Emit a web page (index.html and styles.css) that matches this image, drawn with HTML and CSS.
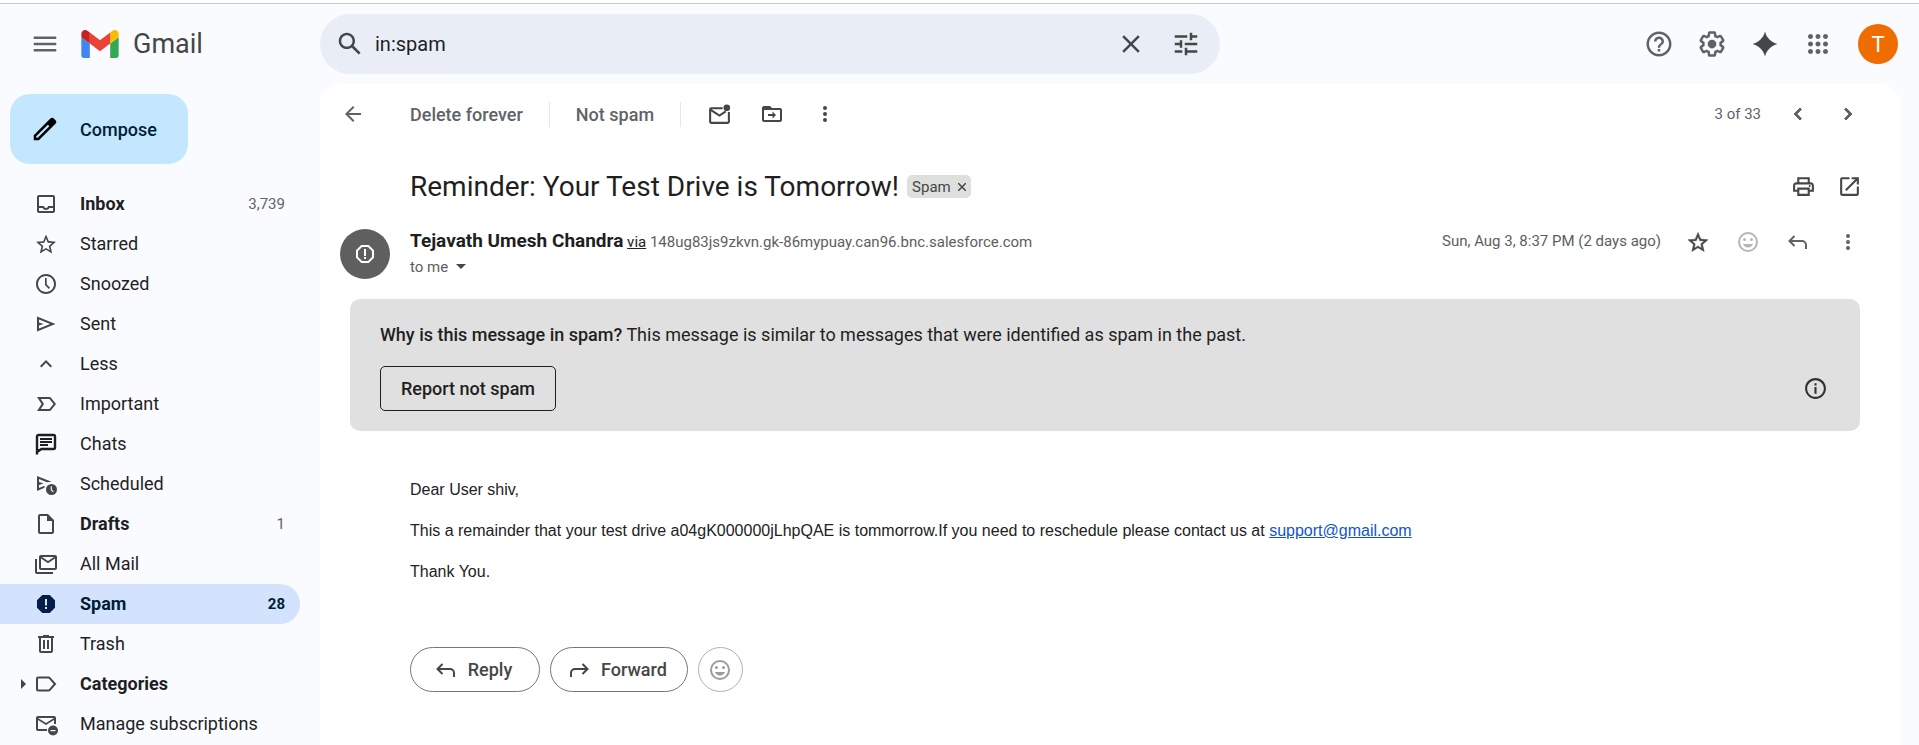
FILE: index.html
```html
<!DOCTYPE html>
<html lang="en">
<head>
<meta charset="utf-8">
<title>Gmail</title>
<link rel="stylesheet" href="styles.css">
</head>
<body>
<div class="app">
  <header class="topbar">
    <div class="brand">
      <button class="icon-btn" aria-label="Main menu"><svg class="ic ic-30" viewBox="0 0 24 24"><path d="M3 18h18v-2H3v2zm0-5h18v-2H3v2zm0-7v2h18V6H3z"/></svg></button>
      <a class="logo" href="#">
        <svg class="logo-mark" viewBox="52 42 88 66" aria-hidden="true"><path fill="#4285f4" d="M58 108h14V74L52 59v43c0 3.320 2.690 6 6 6"/><path fill="#34a853" d="M120 108h14c3.320 0 6-2.690 6-6V59l-20 15"/><path fill="#fbbc04" d="M120 48v26l20-15v-8c0-7.420-8.470-11.650-14.400-7.200"/><path fill="#ea4335" d="M72 74V48l24 18 24-18v26L96 92"/><path fill="#c5221f" d="M52 51v8l20 15V48l-5.600-4.200c-5.940-4.450-14.400-.22-14.400 7.200"/></svg>
        <span class="logo-text">Gmail</span>
      </a>
    </div>
    <form class="search" role="search">
      <button type="button" class="icon-btn" aria-label="Search"><svg class="ic ic-30" viewBox="0 0 24 24"><path d="M20.490 19l-5.730-5.730C15.530 12.200 16 10.910 16 9.500 16 5.910 13.090 3 9.500 3S3 5.910 3 9.500 5.910 16 9.500 16c1.410 0 2.700-.47 3.770-1.240L19 20.490 20.490 19zM5 9.500C5 7.010 7.010 5 9.500 5S14 7.010 14 9.500 11.990 14 9.500 14 5 11.990 5 9.500z"/></svg></button>
      <input class="search-input" type="text" value="in:spam" aria-label="Search mail">
      <button type="button" class="icon-btn" aria-label="Clear search"><svg class="ic ic-30" viewBox="0 0 24 24"><path d="M19 6.410L17.590 5 12 10.590 6.410 5 5 6.410 10.590 12 5 17.590 6.410 19 12 13.410 17.590 19 19 17.590 13.410 12z"/></svg></button>
      <button type="button" class="icon-btn" aria-label="Show search options"><svg class="ic ic-30" viewBox="0 0 24 24"><path d="M3 17v2h6v-2H3zM3 5v2h10V5H3zm10 16v-2h8v-2h-8v-2h-2v6h2zM7 9v2H3v2h4v2h2V9H7zm14 4v-2H11v2h10zm-6-4h2V7h4V5h-4V3h-2v6z"/></svg></button>
    </form>
    <div class="tools">
      <button class="icon-btn" aria-label="Support"><svg class="ic ic-30" viewBox="0 0 24 24"><path d="M11 18h2v-2h-2v2zm1-16C6.480 2 2 6.480 2 12s4.480 10 10 10 10-4.480 10-10S17.520 2 12 2zm0 18c-4.410 0-8-3.590-8-8s3.590-8 8-8 8 3.590 8 8-3.590 8-8 8zm0-14c-2.210 0-4 1.790-4 4h2c0-1.100.9-2 2-2s2 .9 2 2c0 2-3 1.750-3 5h2c0-2.250 3-2.500 3-5 0-2.210-1.790-4-4-4z"/></svg></button>
      <button class="icon-btn" aria-label="Settings"><svg class="ic ic-30" viewBox="0 0 24 24"><path d="M13.850 22.250h-3.700c-.74 0-1.360-.54-1.450-1.270l-.27-1.890c-.27-.14-.53-.29-.79-.46l-1.800.72c-.7.26-1.470-.03-1.810-.65L2.200 15.530c-.35-.66-.2-1.440.36-1.880l1.530-1.190c-.01-.15-.02-.3-.02-.46 0-.15.010-.31.020-.46l-1.520-1.190c-.59-.45-.74-1.260-.37-1.880l1.850-3.190c.34-.62 1.110-.9 1.790-.63l1.810.73c.26-.17.52-.32.78-.46l.27-1.910c.09-.7.71-1.250 1.440-1.250h3.700c.74 0 1.360.54 1.450 1.270l.27 1.890c.27.14.53.29.79.46l1.800-.72c.71-.26 1.480.03 1.820.65l1.840 3.180c.36.66.2 1.440-.36 1.880l-1.520 1.190c.01.15.02.3.02.46s-.01.31-.02.46l1.520 1.190c.56.45.72 1.230.37 1.860l-1.860 3.220c-.34.62-1.110.9-1.800.63l-1.800-.72c-.26.17-.52.32-.78.46l-.27 1.910c-.1.680-.72 1.220-1.460 1.220zm-3.230-2h2.760l.37-2.550.53-.22c.44-.18.88-.44 1.340-.78l.45-.34 2.380.96 1.380-2.400-2.030-1.580.07-.56c.03-.26.060-.51.060-.78s-.03-.53-.06-.78l-.07-.56 2.030-1.580-1.390-2.400-2.390.96-.45-.35c-.42-.32-.87-.58-1.330-.77l-.52-.22-.37-2.550h-2.760l-.37 2.550-.53.21c-.44.190-.88.440-1.340.790l-.45.33-2.380-.95-1.390 2.390 2.030 1.580-.07.560a7 7 0 0 0 0 1.560l.07.560-2.030 1.580 1.380 2.400 2.390-.96.450.35c.43.330.86.580 1.330.77l.53.220.38 2.560z"/><circle cx="12" cy="12" r="3.500"/></svg></button>
      <button class="icon-btn icon-btn-dark" aria-label="Ask Gemini"><svg class="ic ic-30" viewBox="0 0 24 24"><path d="M12 2c1.200 5 5 8.800 10 10-5 1.200-8.800 5-10 10-1.200-5-5-8.800-10-10 5-1.200 8.800-5 10-10z"/></svg></button>
      <button class="icon-btn" aria-label="Google apps"><svg class="ic ic-30" viewBox="0 0 24 24"><path d="M6 8c1.100 0 2-.9 2-2s-.9-2-2-2-2 .9-2 2 .9 2 2 2zm6 12c1.100 0 2-.9 2-2s-.9-2-2-2-2 .9-2 2 .9 2 2 2zm-6 0c1.100 0 2-.9 2-2s-.9-2-2-2-2 .9-2 2 .9 2 2 2zm0-6c1.100 0 2-.9 2-2s-.9-2-2-2-2 .9-2 2 .9 2 2 2zm6 0c1.100 0 2-.9 2-2s-.9-2-2-2-2 .9-2 2 .9 2 2 2zm4-8c0 1.100.9 2 2 2s2-.9 2-2-.9-2-2-2-2 .9-2 2zm-4 2c1.100 0 2-.9 2-2s-.9-2-2-2-2 .9-2 2 .9 2 2 2zm6 6c1.100 0 2-.9 2-2s-.9-2-2-2-2 .9-2 2 .9 2 2 2zm0 6c1.100 0 2-.9 2-2s-.9-2-2-2-2 .9-2 2 .9 2 2 2z"/></svg></button>
      <button class="account" aria-label="Google Account">T</button>
    </div>
  </header>

  <div class="main">
    <nav class="side">
      <button class="compose"><svg class="ic ic-30" viewBox="0 0 24 24"><path fill-rule="evenodd" d="M20.400 4.900l-1.300-1.300c-.8-.8-2-.8-2.800 0L3 16.900V21h4.100L20.400 7.700c.8-.8.8-2 0-2.800zM6.200 19H5v-1.200l9.300-9.300 1.200 1.200L6.200 19z"/></svg>Compose</button>
      <ul class="folders">
        <li><a class="folder folder-bold" href="#"><svg class="ic ic-24" viewBox="0 0 24 24"><path d="M19 3H5c-1.100 0-2 .9-2 2v14c0 1.100.9 2 2 2h14c1.100 0 2-.9 2-2V5c0-1.100-.9-2-2-2zm0 16H5v-3h3.560c.69 1.190 1.970 2 3.450 2s2.750-.81 3.450-2H19v3zm0-5h-4.990c0 1.100-.9 2-2 2s-2-.9-2-2H5V5h14v9z"/></svg><span class="name">Inbox</span><span class="count">3,739</span></a></li>
        <li><a class="folder" href="#"><svg class="ic ic-24" viewBox="0 0 24 24"><path d="M22 9.740l-7.190-.62L12 2.500 9.190 9.130 2 9.740l5.460 4.730-1.640 7.030L12 17.770l6.180 3.730-1.630-7.030L22 9.740zM12 15.900l-3.760 2.270 1-4.280-3.320-2.880 4.380-.38L12 6.600l1.710 4.040 4.380.38-3.320 2.880 1 4.280L12 15.900z"/></svg><span class="name">Starred</span></a></li>
        <li><a class="folder" href="#"><svg class="ic ic-24" viewBox="0 0 24 24"><path d="M11.990 2C6.470 2 2 6.480 2 12s4.470 10 9.990 10C17.520 22 22 17.520 22 12S17.520 2 11.990 2zM12 20c-4.420 0-8-3.580-8-8s3.580-8 8-8 8 3.580 8 8-3.580 8-8 8zM12.700 6H11v7l3.800 4 1.200-1.200-3.300-3.600z"/></svg><span class="name">Snoozed</span></a></li>
        <li><a class="folder" href="#"><svg class="ic ic-24" viewBox="0 0 24 24"><path fill-rule="evenodd" d="M3 4.500v15L21.500 12 3 4.500zm2 3L16.200 12 5 16.500V13.500L9.500 12 5 10.500v-3z"/></svg><span class="name">Sent</span></a></li>
        <li><a class="folder" href="#"><svg class="ic ic-24" viewBox="0 0 24 24"><path d="M12 8l-6 6 1.410 1.410L12 10.830l4.590 4.580L18 14z"/></svg><span class="name">Less</span></a></li>
        <li><a class="folder" href="#"><svg class="ic ic-24" viewBox="0 0 24 24"><path fill-rule="evenodd" d="M3 5l4.600 7L3 19h12.500c.7 0 1.300-.3 1.700-.9L22 12l-4.800-6.100c-.4-.6-1-.9-1.700-.9H3zm3.700 2h8.800l4 5-4 5H6.700l3.300-5-3.300-5z"/></svg><span class="name">Important</span></a></li>
        <li><a class="folder folder-ink" href="#"><svg class="ic ic-24" viewBox="0 0 24 24"><path d="M3 22.500V4.500C3 3.700 3.700 3 4.500 3h15c.8 0 1.500.7 1.500 1.500v11c0 .8-.7 1.500-1.500 1.500H7.500L3 20" fill="none" stroke="currentColor" stroke-width="2.400"/><path d="M6 6h12v2H6zM6 9h12v2H6zM6 12h8v2H6zM2 17h5l-5 5.500z"/></svg><span class="name">Chats</span></a></li>
        <li><a class="folder" href="#"><svg class="ic ic-24" viewBox="0 0 24 24"><path fill-rule="evenodd" d="M3 4v15l7.500-3.200V13.700L5 16V13l4.500-1.500L5 10V7l8 3.200 4.500-.4L3 4z"/><circle cx="17.500" cy="17.500" r="5.500"/><path d="M17.300 14.300v3.500l2 2" fill="none" stroke="#f9fbff" stroke-width="1.200"/></svg><span class="name">Scheduled</span></a></li>
        <li><a class="folder folder-bold" href="#"><svg class="ic ic-24" viewBox="0 0 24 24"><path fill-rule="evenodd" d="M6 2c-1.100 0-2 .9-2 2v16c0 1.100.9 2 2 2h12c1.100 0 2-.9 2-2V8l-6-6H6zm0 2h7v5h5v11H6V4z"/></svg><span class="name">Drafts</span><span class="count">1</span></a></li>
        <li><a class="folder" href="#"><svg class="ic ic-24" viewBox="0 0 24 24"><path d="M21 3H7c-1.100 0-2 .9-2 2v11c0 1.100.9 2 2 2h14c1.100 0 2-.9 2-2V5c0-1.100-.9-2-2-2zm-1 2l-6 4-6-4h12zM7 16V6.500l7 4.800 7-4.800V16H7zM3 7H1v13c0 1.100.9 2 2 2h16v-2H3V7z"/></svg><span class="name">All Mail</span></a></li>
        <li><a class="folder folder-bold folder-active" href="#" aria-current="page"><svg class="ic ic-24" viewBox="0 0 24 24"><path fill-rule="evenodd" d="M15.730 3H8.270L3 8.270v7.460L8.270 21h7.460L21 15.730V8.270L15.730 3zM11 7h2v6.500h-2V7zm0 8h2v2h-2v-2z"/></svg><span class="name">Spam</span><span class="count">28</span></a></li>
        <li><a class="folder" href="#"><svg class="ic ic-24" viewBox="0 0 24 24"><path d="M15 4V3H9v1H4v2h1v13c0 1.100.9 2 2 2h10c1.100 0 2-.9 2-2V6h1V4h-5zm2 15H7V6h10v13zM9 8h2v9H9zm4 0h2v9h-2z"/></svg><span class="name">Trash</span></a></li>
        <li><a class="folder folder-bold folder-tree" href="#"><svg class="twisty" viewBox="0 0 5 10"><path d="M0 0l5 5-5 5z"/></svg><svg class="ic ic-24" viewBox="0 0 24 24"><path d="M4 5.500h10.500c.5 0 1 .2 1.300.6L21 12l-5.200 5.900c-.3.400-.8.6-1.300.6H4c-.6 0-1-.4-1-1v-11c0-.6.4-1 1-1z" fill="none" stroke="currentColor" stroke-width="2"/></svg><span class="name">Categories</span></a></li>
        <li><a class="folder" href="#"><svg class="ic ic-24" viewBox="0 0 24 24"><path d="M13 19H4c-1.100 0-2-.9-2-2V6c0-1.100.9-2 2-2h16c1.100 0 2 .9 2 2v6h-2V8l-8 5-8-5v9h9v2zM4 6l8 5 8-5H4z"/><circle cx="19" cy="18.500" r="5"/><path fill="#f9fbff" d="M16.500 18h5v1.200h-5z"/></svg><span class="name">Manage subscriptions</span></a></li>
      </ul>
    </nav>

    <main class="panel">
      <div class="toolbar">
        <button class="icon-btn" aria-label="Back to Spam"><svg class="ic ic-24" viewBox="0 0 24 24"><path d="M20 11H7.830l5.590-5.590L12 4l-8 8 8 8 1.410-1.410L7.830 13H20z"/></svg></button>
        <div class="toolbar-text">
          <button class="text-btn">Delete forever</button>
          <button class="text-btn">Not spam</button>
        </div>
        <div class="toolbar-icons">
          <button class="icon-btn icon-btn-dark" aria-label="Mark as unread"><svg class="ic ic-25" viewBox="0 0 24 24"><path d="M21 9.500V19c0 .6-.4 1-1 1H4c-.6 0-1-.4-1-1V7c0-.6.400-1 1-1h11M3.500 7.500L12 13l6-4" fill="none" stroke="currentColor" stroke-width="2"/><circle cx="19" cy="5.500" r="3.200"/></svg></button>
          <button class="icon-btn icon-btn-dark" aria-label="Move to"><svg class="ic ic-24" viewBox="0 0 24 24"><path d="M20 6h-8l-2-2H4c-1.100 0-2 .9-2 2v12c0 1.100.9 2 2 2h16c1.100 0 2-.9 2-2V8c0-1.100-.9-2-2-2zm0 12H4V8h16v10zm-7.500-1.500L16 13l-3.500-3.500V12H8v2h4.500z"/></svg></button>
          <button class="icon-btn icon-btn-dark" aria-label="More"><svg class="ic ic-24" viewBox="0 0 24 24"><circle cx="12" cy="6" r="2"/><circle cx="12" cy="12" r="2"/><circle cx="12" cy="18" r="2"/></svg></button>
        </div>
        <div class="pager">
          <span>3 of 33</span>
          <button class="icon-btn" aria-label="Newer"><svg class="ic ic-24" viewBox="0 0 24 24"><path d="M15.410 7.410L14 6l-6 6 6 6 1.410-1.410L10.830 12z" stroke="currentColor"/></svg></button>
          <button class="icon-btn" aria-label="Older"><svg class="ic ic-24" viewBox="0 0 24 24"><path d="M10 6L8.590 7.410 13.170 12l-4.580 4.590L10 18l6-6z" stroke="currentColor"/></svg></button>
        </div>
      </div>

      <div class="subject">
        <h1 class="subject-text">Reminder: Your Test Drive is Tomorrow!</h1>
        <span class="tag">Spam <button class="tag-x" aria-label="Remove label Spam"><svg viewBox="0 0 8 8"><path d="M0 0l8 8M8 0L0 8" fill="none" stroke="currentColor" stroke-width="1.500"/></svg></button></span>
        <div class="subject-tools">
          <button class="icon-btn icon-btn-dark" aria-label="Print all"><svg class="ic ic-25" viewBox="0 0 24 24"><path fill-rule="evenodd" d="M19 8h-1V3H6v5H5c-1.660 0-3 1.340-3 3v6h4v4h12v-4h4v-6c0-1.660-1.340-3-3-3zM8 5h8v3H8V5zm8 14H8v-4h8v4zm2-4v-2H6v2H4v-4c0-.55.450-1 1-1h14c.55 0 1 .45 1 1v4h-2z"/><circle cx="18" cy="11.500" r="1"/></svg></button>
          <button class="icon-btn icon-btn-dark" aria-label="In new window"><svg class="ic ic-25" viewBox="0 0 24 24"><path d="M19 19H5V5h7V3H5c-1.110 0-2 .9-2 2v14c0 1.100.890 2 2 2h14c1.100 0 2-.9 2-2v-7h-2v7zM14 3v2h3.590l-9.830 9.830 1.410 1.410L19 6.410V10h2V3h-7z"/></svg></button>
        </div>
      </div>

      <div class="sender">
        <div class="avatar"><svg class="ic ic-24" viewBox="0 0 24 24"><path d="M15.730 3H8.270L3 8.270v7.460L8.270 21h7.460L21 15.730V8.270L15.730 3zM19 14.900L14.900 19H9.100L5 14.900V9.100L9.100 5h5.800L19 9.100v5.800zM11 7h2v7h-2zm0 8h2v2h-2z"/></svg></div>
        <div class="sender-info">
          <div class="from"><strong class="from-name">Tejavath Umesh Chandra</strong> <a class="via" href="#">via</a> 148ug83js9zkvn.gk-86mypuay.can96.bnc.salesforce.com</div>
          <button class="to">to me <svg class="caret" viewBox="0 0 10 5"><path d="M0 0h10L5 5z"/></svg></button>
        </div>
        <span class="date">Sun, Aug 3, 8:37 PM (2 days ago)</span>
        <div class="sender-tools">
          <button class="icon-btn icon-btn-dark" aria-label="Star"><svg class="ic ic-24" viewBox="0 0 24 24"><path d="M22 9.740l-7.190-.62L12 2.500 9.190 9.130 2 9.740l5.460 4.730-1.640 7.030L12 17.770l6.180 3.730-1.630-7.030L22 9.740zM12 15.900l-3.760 2.270 1-4.280-3.320-2.880 4.380-.38L12 6.600l1.710 4.040 4.380.38-3.320 2.880 1 4.280L12 15.900z" stroke="currentColor" stroke-width=".5"/></svg></button>
          <button class="icon-btn icon-btn-faint" aria-label="Add reaction"><svg class="ic ic-24" viewBox="0 0 24 24"><circle cx="12" cy="12" r="9" fill="none" stroke="currentColor" stroke-width="2"/><circle cx="8.500" cy="9.500" r="1.500"/><circle cx="15.500" cy="9.500" r="1.500"/><path d="M7 14h10c-.8 2-2.700 3.500-5 3.500S7.800 16 7 14z"/></svg></button>
          <button class="icon-btn" aria-label="Reply"><svg class="ic ic-24" viewBox="0 0 24 24"><path d="M8.500 6L3.500 11l5 5M3.500 11H16c2.200 0 4 1.800 4 4v4" fill="none" stroke="currentColor" stroke-width="2"/></svg></button>
          <button class="icon-btn" aria-label="More message options"><svg class="ic ic-24" viewBox="0 0 24 24"><circle cx="12" cy="6" r="2"/><circle cx="12" cy="12" r="2"/><circle cx="12" cy="18" r="2"/></svg></button>
        </div>
      </div>

      <section class="notice">
        <p class="notice-text"><strong>Why is this message in spam?</strong> This message is similar to messages that were identified as spam in the past.</p>
        <div class="notice-row">
          <button class="notice-btn">Report not spam</button>
          <button class="icon-btn icon-btn-ink" aria-label="Learn more"><svg class="ic ic-25" viewBox="0 0 24 24"><path d="M11 10.500h2V17h-2zm0-3.500h2v2h-2zm1-5C6.480 2 2 6.480 2 12s4.480 10 10 10 10-4.480 10-10S17.520 2 12 2zm0 18c-4.410 0-8-3.590-8-8s3.590-8 8-8 8 3.590 8 8-3.590 8-8 8z"/></svg></button>
        </div>
      </section>

      <article class="mail">
        <p>Dear User shiv,</p>
        <p>This a remainder that your test drive a04gK000000jLhpQAE is tommorrow.If you need to reschedule please contact us at <a class="mail-link" href="mailto:support@gmail.com">support@gmail.com</a></p>
        <p>Thank You.</p>
      </article>

      <div class="actions">
        <button class="pill"><svg class="ic ic-24" viewBox="0 0 24 24"><path d="M8.500 6L3.500 11l5 5M3.500 11H16c2.200 0 4 1.800 4 4v4" fill="none" stroke="currentColor" stroke-width="2"/></svg>Reply</button>
        <button class="pill"><svg class="ic ic-24" viewBox="0 0 24 24"><path d="M15.500 6l5 5-5 5M20.500 11H8c-2.200 0-4 1.800-4 4v4" fill="none" stroke="currentColor" stroke-width="2"/></svg>Forward</button>
        <button class="pill pill-round" aria-label="Add reaction"><svg class="ic ic-24" viewBox="0 0 24 24"><circle cx="12" cy="12" r="9" fill="none" stroke="currentColor" stroke-width="2"/><circle cx="8.500" cy="9.500" r="1.500"/><circle cx="15.500" cy="9.500" r="1.500"/><path d="M7 14h10c-.8 2-2.700 3.500-5 3.500S7.800 16 7 14z"/></svg></button>
      </div>
    </main>
  </div>
</div>
</body>
</html>
```
FILE: styles.css
```css
* { box-sizing: border-box; }
body { margin: 0; font-family: Roboto, "Open Sans", sans-serif; font-size: 18px; color: #1f1f1f; background: #f9fbff; }
button { border: 0; padding: 0; background: none; font: inherit; color: inherit; cursor: pointer; }
a { color: inherit; text-decoration: none; }
p, h1, ul { margin: 0; padding: 0; }
ul { list-style: none; }

.app { min-height: 100vh; display: flex; flex-direction: column; border-top: 3px solid #fff; }
.ic { display: block; fill: currentColor; flex: none; }
.ic-24 { width: 24px; height: 24px; }
.ic-25 { width: 25px; height: 25px; }
.ic-30 { width: 30px; height: 30px; }
.icon-btn { display: flex; align-items: center; justify-content: center; width: 50px; height: 50px; color: #5f6368; flex: none; }
.icon-btn-dark { color: #444746; }
.icon-btn-ink { color: #303030; }
.icon-btn-faint { color: #b5b6b6; }

/* Top bar */
.topbar { display: flex; align-items: center; height: 81px; padding-right: 21px; border-top: 1px solid #c8c9cd; }
.brand { display: flex; align-items: center; width: 320px; padding-left: 20px; flex: none; }
.logo { display: flex; align-items: center; gap: 14px; padding-left: 11px; }
.logo-mark { width: 38px; height: 28px; display: block; }
.logo-text { font-size: 27px; color: #444746; }
.search { display: flex; align-items: center; width: 900px; height: 60px; padding: 0 7px 0 5px; border-radius: 30px; background: #e9eef6; }
.search .icon-btn { color: #444746; width: 55px; }
.search .icon-btn:first-child { width: 50px; }
.search-input { flex: 1; min-width: 0; border: 0; outline: 0; padding: 0; background: none; font: inherit; font-size: 20px; color: #1f1f1f; }
.tools { display: flex; align-items: center; gap: 3px; margin-left: auto; }
.account { width: 40px; height: 40px; margin-left: 12px; border-radius: 50%; background: #ef6c00; color: #fff; font-size: 22px; }

/* Sidebar */
.main { display: flex; flex: 1; padding-right: 19px; }
.side { width: 320px; flex: none; padding: 10px 20px 0 0; }
.compose { display: flex; align-items: center; gap: 20px; height: 70px; margin: 0 0 20px 10px; padding: 0 31px 0 20px; border-radius: 20px; background: #c2e7ff; color: #001d35; font-weight: 500; }
.compose .ic { color: #000; }
.folder { display: flex; align-items: center; height: 40px; padding: 0 15px 0 34px; border-radius: 0 20px 20px 0; color: #1f1f1f; }
.folder .ic { color: #444746; }
.folder .name { flex: 1; padding: 0 0 2px 22px; }
.count { font-size: 15px; font-weight: 400; color: #5f6368; }
.folder-bold .name { font-weight: 700; }
.folder-ink .ic { color: #1f1f1f; }
.folder-active { background: #d3e3fd; color: #001d35; }
.folder-active .ic { color: #041e49; }
.folder-active .count { font-weight: 700; color: #001d35; }
.folder-tree { padding-left: 21px; }
.twisty { width: 5px; height: 10px; margin-right: 8px; fill: #444746; }

/* Message panel */
.panel { flex: 1; min-width: 0; border-radius: 20px 20px 0 0; background: #fff; }
.toolbar { display: flex; align-items: center; height: 60px; padding: 0 27px 0 8px; }
.toolbar-text { display: flex; gap: 26px; padding-left: 32px; }
.text-btn { height: 25px; padding-right: 26px; border-right: 1px solid #e4e6ea; color: #5f6368; font-weight: 500; }
.toolbar-icons { display: flex; gap: 3px; padding-left: 13px; }
.pager { display: flex; align-items: center; margin-left: auto; font-size: 15px; color: #5f6368; }
.pager span { padding-right: 12px; }

.subject { display: flex; align-items: center; min-height: 85px; padding: 0 28px 0 90px; }
.subject-text { font-size: 28px; font-weight: 400; line-height: 36px; }
.tag { display: flex; align-items: center; gap: 7px; height: 23px; margin-left: 8px; padding: 0 5px; border-radius: 5px; background: #dde0dd; color: #444746; font-size: 15px; }
.tag-x { width: 8px; height: 8px; display: flex; }
.subject-tools { display: flex; margin-left: auto; }
.subject-tools .icon-btn { width: 46px; }

.sender { display: flex; align-items: flex-start; padding: 0 27px 20px 20px; }
.avatar { display: flex; align-items: center; justify-content: center; width: 50px; height: 50px; border-radius: 50%; background: #5f5f5f; color: #fff; }
.sender-info { padding-left: 20px; }
.from { font-size: 15px; line-height: 24px; color: #5e5e5e; }
.from-name { font-size: 19px; color: #1f1f1f; }
.via { color: #222; text-decoration: underline; }
.to { display: flex; align-items: center; gap: 8px; height: 25px; font-size: 15px; color: #5e5e5e; }
.caret { width: 10px; height: 5px; fill: #444746; }
.date { margin-left: auto; font-size: 15px; line-height: 24px; color: #5e5e5e; }
.sender-tools { display: flex; padding-left: 12px; }
.sender-tools .icon-btn { height: 26px; }

.notice { margin: 0 40px 0 30px; padding: 22px 20px 20px 30px; border-radius: 10px; background: #e0e0e0; }
.notice-text { line-height: 28px; }
.notice-text strong { font-weight: 500; }
.notice-row { display: flex; align-items: center; justify-content: space-between; padding-top: 17px; }
.notice-row .icon-btn { height: 45px; }
.notice-btn { height: 45px; padding: 0 20px; border: 1px solid #1f1f1f; border-radius: 5px; font-weight: 500; }

.mail { padding: 49px 90px 0; font-family: "Liberation Sans", Arial, sans-serif; font-size: 16px; line-height: 20px; color: #222; }
.mail p { margin-bottom: 21px; }
.mail-link { color: #1155cc; text-decoration: underline; }

.actions { display: flex; gap: 10px; padding: 44px 90px 30px; }
.pill { display: flex; align-items: center; justify-content: center; gap: 10px; min-width: 130px; height: 45px; padding: 0 20px 0 16px; border: 1px solid #747775; border-radius: 23px; color: #444746; font-weight: 500; }
.pill-round { min-width: 45px; padding: 0; border-color: #b0b1b1; color: #9b9c9c; }
```
